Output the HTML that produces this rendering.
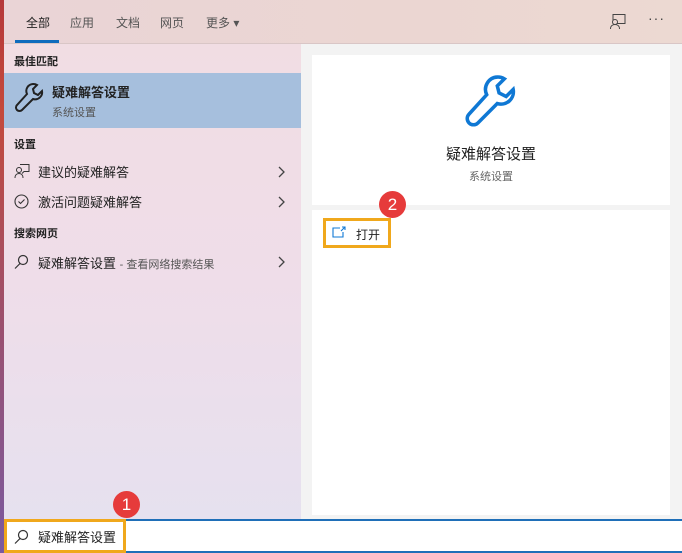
<!DOCTYPE html>
<html><head><meta charset="utf-8"><style>
*{margin:0;padding:0;box-sizing:border-box}
body{width:682px;height:553px;overflow:hidden;position:relative;font-family:"Liberation Sans","Noto Sans CJK SC",sans-serif;background:#f3f3f3}
.strip{position:absolute;left:0;top:0;width:4px;height:553px;background:linear-gradient(#b5383a,#c44a3c 20%,#9a5070 60%,#7a5aa0)}
.hdr{position:absolute;left:4px;top:0;width:678px;height:44px;background:linear-gradient(90deg,#ead4d6,#ebd6d2 60%,#ecd9d2);border-bottom:1px solid #d9c6c6}
.tab{position:absolute;top:14px;font-size:12px;color:#555}
.left{position:absolute;left:4px;top:44px;width:297px;height:475px;background:linear-gradient(#f1dde3,#efdde9 50%,#e6e1ef)}
.t{position:absolute;font-size:13px;color:#222}
.sec{position:absolute;left:10px;font-size:11px;font-weight:bold;color:#222}
.chev{position:absolute;left:273px}
.card{position:absolute;left:312px;width:358px;background:#fff}
.badge{position:absolute;width:27px;height:27px;border-radius:50%;background:#e63b3b;color:#fff;font-size:17px;text-align:center;line-height:27px}
</style></head><body>
<div class="strip"></div>
<div class="hdr">
<span class="tab" style="left:22px;color:#222">全部</span>
<span class="tab" style="left:66px">应用</span>
<span class="tab" style="left:112px">文档</span>
<span class="tab" style="left:156px">网页</span>
<span class="tab" style="left:202px">更多 ▾</span>
<div style="position:absolute;left:11px;top:40px;width:44px;height:3px;background:#0f6cbd"></div>
<svg style="position:absolute;left:605px;top:13px" width="18" height="18" viewBox="0 0 18 18" fill="none" stroke="#444" stroke-width="1"><rect x="4" y="1.5" width="12" height="9"/><circle cx="6" cy="9" r="2.5" fill="#ebd6d2"/><path d="M1.5 16c0-3 2-4.5 4.5-4.5s4.5 1.5 4.5 4.5"/></svg>
<span style="position:absolute;left:644px;top:10px;font-size:14px;color:#444;letter-spacing:1px">···</span>
</div>
<div class="left">
<div class="sec" style="top:9px">最佳匹配</div>
<div style="position:absolute;left:0;top:29px;width:297px;height:55px;background:#a6bfdd"></div>
<svg style="position:absolute;left:9px;top:36px" width="34" height="34" viewBox="0 0 34 34" fill="none" stroke="#222" stroke-width="2"><path d="M20 4a7 7 0 0 0-6 10L4 25a3 3 0 0 0 5 5L20 19a7 7 0 0 0 9-8l-4 4-4-2-1-4 4-4a7 7 0 0 0-4-1z"/></svg>
<div class="t" style="left:48px;top:38px;font-weight:bold">疑难解答设置</div>
<div class="t" style="left:48px;top:60px;font-size:11px;color:#555">系统设置</div>
<div class="sec" style="top:92px">设置</div>
<svg style="position:absolute;left:10px;top:119px" width="16" height="16" viewBox="0 0 16 16" fill="none" stroke="#333" stroke-width="1"><path d="M6 1.5h9v7h-5l-2 2"/><circle cx="5" cy="7" r="2.5"/><path d="M1 15c0-3 1.8-4.5 4-4.5s4 1.5 4 4.5"/></svg>
<div class="t" style="left:34px;top:118px">建议的疑难解答</div>
<svg class="chev" style="top:122px" width="8" height="12" viewBox="0 0 8 12" fill="none" stroke="#444" stroke-width="1.3"><path d="M2 1l5 5-5 5"/></svg>
<svg style="position:absolute;left:10px;top:150px" width="15" height="15" viewBox="0 0 15 15" fill="none" stroke="#333" stroke-width="1.1"><circle cx="7.5" cy="7.5" r="6.5"/><path d="M4.5 7.5l2 2 4-4"/></svg>
<div class="t" style="left:34px;top:148px">激活问题疑难解答</div>
<svg class="chev" style="top:152px" width="8" height="12" viewBox="0 0 8 12" fill="none" stroke="#444" stroke-width="1.3"><path d="M2 1l5 5-5 5"/></svg>
<div class="sec" style="top:181px">搜索网页</div>
<svg style="position:absolute;left:10px;top:210px" width="15" height="15" viewBox="0 0 15 15" fill="none" stroke="#333" stroke-width="1.2"><circle cx="9" cy="6" r="4.5"/><path d="M6 9.5l-5 5"/></svg>
<div class="t" style="left:34px;top:209px">疑难解答设置 <span style="font-size:11px;color:#555">- 查看网络搜索结果</span></div>
<svg class="chev" style="top:212px" width="8" height="12" viewBox="0 0 8 12" fill="none" stroke="#444" stroke-width="1.3"><path d="M2 1l5 5-5 5"/></svg>
</div>
<div class="card" style="top:55px;height:150px">
<svg style="position:absolute;left:150px;top:15px" width="60" height="60" viewBox="0 0 34 34" fill="none" stroke="#0f78d4" stroke-width="2"><path d="M20 4a7 7 0 0 0-6 10L4 25a3 3 0 0 0 5 5L20 19a7 7 0 0 0 9-8l-4 4-4-2-1-4 4-4a7 7 0 0 0-4-1z"/></svg>
<div style="position:absolute;left:0;width:358px;top:88px;text-align:center;font-size:15px;color:#222">疑难解答设置</div>
<div style="position:absolute;left:0;width:358px;top:113px;text-align:center;font-size:11px;color:#666">系统设置</div>
</div>
<div class="card" style="top:210px;height:305px">
<div style="position:absolute;left:11px;top:8px;width:68px;height:30px;border:3px solid #f0a81c"></div>
<svg style="position:absolute;left:20px;top:16px" width="14" height="12" viewBox="0 0 14 12" fill="none" stroke="#0f78d4" stroke-width="1.1"><path d="M8 2H1v9h10V6"/><path d="M10 1l3 0 0 3M13 1l-4 4"/></svg>
<div style="position:absolute;left:44px;top:16px;font-size:12px;color:#222">打开</div>
</div>
<div class="badge" style="left:379px;top:191px">2</div>
<div style="position:absolute;left:4px;top:519px;width:678px;height:34px;background:#fff;border:2px solid #1f6fb8;border-right:none"></div>
<div style="position:absolute;left:4px;top:519px;width:122px;height:34px;border:3px solid #f0a81c"></div>
<svg style="position:absolute;left:14px;top:529px" width="15" height="15" viewBox="0 0 15 15" fill="none" stroke="#333" stroke-width="1.2"><circle cx="9" cy="6" r="4.5"/><path d="M6 9.5l-5 5"/></svg>
<div style="position:absolute;left:38px;top:527px;font-size:13px;color:#222">疑难解答设置</div>
<div class="badge" style="left:113px;top:491px">1</div>
</body></html>
